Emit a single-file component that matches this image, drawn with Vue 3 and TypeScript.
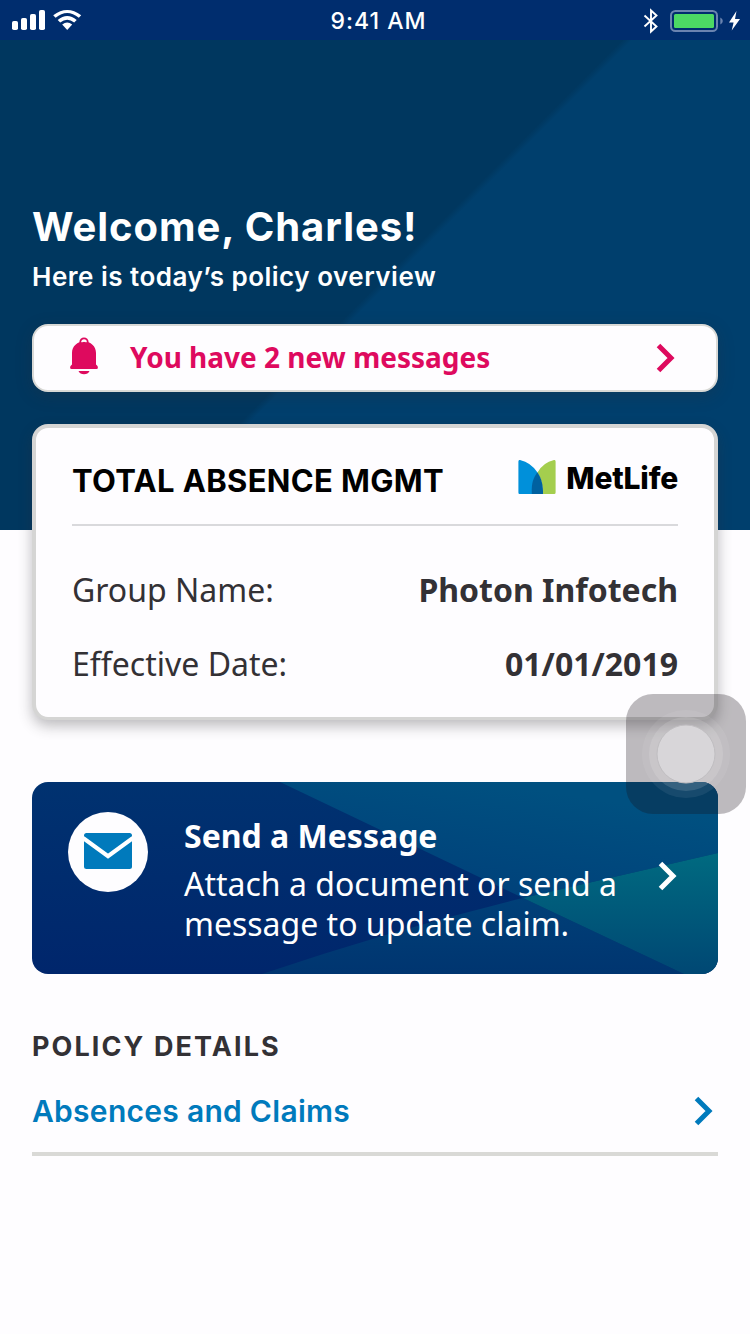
<script setup lang="ts">
interface Fact {
  label: string
  value: string
}

const facts: Fact[] = [
  { label: 'Group Name:', value: 'Photon Infotech' },
  { label: 'Effective Date:', value: '01/01/2019' },
]
</script>

<template>
  <div class="screen">
    <header class="status">
      <div class="status-left">
        <svg width="72" height="22" viewBox="0 0 72 22" fill="#fff">
          <rect x="0" y="12" width="6" height="9" rx="1.8" />
          <rect x="9" y="9" width="6" height="12" rx="1.8" />
          <rect x="18" y="5" width="6" height="16" rx="1.8" />
          <rect x="27" y="1" width="6" height="20" rx="1.8" />
          <path d="M41.2 6.2 43.6 8.8Q55.2-.6 66.8 8.8L69.2 6.2Q55.2-4.4 41.2 6.2Z" />
          <path d="M45.7 10.9 48.2 13.5Q55.2 8 62.2 13.5L64.7 10.9Q55.2 3.2 45.7 10.9Z" />
          <path d="M50.2 15.6 55.2 20.9 60.2 15.6Q55.2 11.6 50.2 15.6Z" />
        </svg>
      </div>
      <span class="clock">9:41 AM</span>
      <div class="status-right">
        <svg width="100" height="28" viewBox="0 0 100 28" fill="none">
          <path d="M4.5 8.5 16.5 19.5 11 24.5V3.500L16.500 8.500 4.500 19.500" stroke="#fff" stroke-width="1.900" />
          <rect x="31" y="4" width="46" height="20" rx="4.500" stroke="#6b84b0" stroke-width="2" />
          <rect x="34" y="7" width="40" height="14" rx="1.500" fill="#4cd964" />
          <path d="M80.300 10.500Q82.800 11.500 82.800 14T80.300 17.500Z" fill="#6b84b0" />
          <path d="M96.500 4 89 15.600H93.600L91.700 23.600 100 11.900H95Z" fill="#fff" />
        </svg>
      </div>
    </header>

    <section class="hero">
      <h1>Welcome, Charles!</h1>
      <p class="sub">Here is today’s policy overview</p>
      <div class="alert">
        <svg class="bell" width="28" height="38" viewBox="0 0 28 38">
          <circle cx="14" cy="5" r="3.700" fill="none" stroke="#de0a5e" stroke-width="1.800" />
          <path d="M14 4.500C20.500 4.500 26 9 26 16V27.500L27.500 29Q28.600 32 26.500 32H1.500Q-.6 32 .5 29L2 27.500V16C2 9 7.500 4.500 14 4.500Z" fill="#de0a5e" />
          <path d="M11.500 5Q14 3.500 16.500 5" stroke="#fff" stroke-width="1.200" fill="none" />
          <path d="M8.500 34H19.500Q18 37.300 14 37.300T8.500 34Z" fill="#de0a5e" />
        </svg>
        <span class="alert-text">You have 2 new messages</span>
        <svg class="chev" width="20" height="30" viewBox="0 0 20 30">
          <path d="M2.500 2.500 15 15 2.500 27.500" fill="none" stroke="#de0a5e" stroke-width="5" />
        </svg>
      </div>
    </section>

    <main>
      <section class="policy">
        <div class="policy-head">
          <h2>TOTAL ABSENCE MGMT</h2>
          <div class="brand">
            <svg width="38" height="34" viewBox="0 0 38 34">
              <path d="M2 0Q13 2.500 19.500 12.500Q16 20 15.500 34H1.500Q.4 34 .4 32.500V1.500Q.4-.2 2 0Z" fill="#0090da" />
              <path d="M36 0Q25 2.500 19.500 12.500Q24.500 20 25 34H36.200Q37.600 34 37.600 32.500V1.500Q37.600-.2 36 0Z" fill="#a4ce4e" />
              <path d="M19.400 12.200C15.300 18 13.300 22.500 13.800 34H25C25.200 25 23.500 18 19.400 12.200Z" fill="#0061a0" />
            </svg>
            <span class="brand-name">MetLife</span>
          </div>
        </div>
        <dl>
          <div v-for="fact in facts" :key="fact.label" class="fact">
            <dt>{{ fact.label }}</dt>
            <dd>{{ fact.value }}</dd>
          </div>
        </dl>
      </section>

      <section class="message">
        <svg class="facets" viewBox="0 0 686 192" preserveAspectRatio="none">
          <defs>
            <linearGradient id="base" x1="0" y1="0" x2="0" y2="1">
              <stop offset="0" stop-color="#003270" />
              <stop offset="1" stop-color="#00266c" />
            </linearGradient>
            <linearGradient id="top" gradientUnits="userSpaceOnUse" x1="460" y1="0" x2="440" y2="120">
              <stop offset="0" stop-color="#005080" />
              <stop offset="1" stop-color="#00407a" />
            </linearGradient>
            <linearGradient id="right" gradientUnits="userSpaceOnUse" x1="0" y1="72" x2="0" y2="190">
              <stop offset="0" stop-color="#006a80" />
              <stop offset="1" stop-color="#004874" />
            </linearGradient>
            <linearGradient id="bottom" gradientUnits="userSpaceOnUse" x1="0" y1="116" x2="0" y2="192">
              <stop offset="0" stop-color="#004078" />
              <stop offset="1" stop-color="#003570" />
            </linearGradient>
          </defs>
          <rect width="686" height="192" fill="url(#base)" />
          <path d="M248 0H686V71L491 116Z" fill="url(#top)" />
          <path d="M230 192Q360 148 491 116L652 192Z" fill="url(#bottom)" />
          <path d="M491 116 686 71V192H652Z" fill="url(#right)" />
        </svg>
        <div class="envelope">
          <svg width="48" height="36" viewBox="0 0 48 36">
            <rect width="48" height="36" rx="2.500" fill="#007abc" />
            <path d="M-1 5 24 23.200 49 5" fill="none" stroke="#fff" stroke-width="4.200" />
          </svg>
        </div>
        <div class="message-copy">
          <h3>Send a Message</h3>
          <p>Attach a document or send a<br />message to update claim.</p>
        </div>
        <svg class="message-chev" width="20" height="30" viewBox="0 0 20 30">
          <path d="M2.500 2.500 15 15 2.500 27.500" fill="none" stroke="#fff" stroke-width="5" />
        </svg>
      </section>

      <section class="details">
        <h4>POLICY DETAILS</h4>
        <div class="link-row">
          <span class="link">Absences and Claims</span>
          <svg width="20" height="30" viewBox="0 0 20 30">
            <path d="M2.500 2.500 15 15 2.500 27.500" fill="none" stroke="#007abc" stroke-width="5" />
          </svg>
        </div>
      </section>
    </main>

    <div class="assistive">
      <svg width="120" height="120" viewBox="0 0 120 120">
        <circle cx="60" cy="60" r="44" fill="#fff" fill-opacity=".07" />
        <circle cx="60" cy="60" r="37" fill="#fff" fill-opacity=".13" />
        <circle cx="60" cy="60" r="29" fill="#d8d6d9" stroke="#c0bec1" stroke-width="1" />
      </svg>
    </div>
  </div>
</template>

<style>
body {
  margin: 0;
  background: #fefdff;
}
</style>

<style scoped>
.screen {
  position: relative;
  width: 750px;
  height: 1334px;
  overflow: hidden;
  background: #fefdff;
  color: #333135;
  font-family: "Noto Sans", sans-serif;
}
h1, h2, h3, h4, p, dl, dt, dd {
  margin: 0;
}
svg {
  display: block;
  flex: none;
}
.status {
  display: grid;
  grid-template-columns: 1fr auto 1fr;
  align-items: center;
  box-sizing: border-box;
  height: 40px;
  padding: 0 10px 0 12px;
  background: #002d6e;
}
.status-left {
  padding-bottom: 1px;
}
.status-right {
  display: flex;
  justify-content: flex-end;
  padding-top: 1px;
}
.clock {
  padding: 2px 0 0 5px;
  color: #fff;
  font: 500 23px/38px Inter, sans-serif;
  letter-spacing: 1px;
}
.hero {
  box-sizing: border-box;
  height: 490px;
  padding: 161px 32px 0;
  background: linear-gradient(135deg, #00375f 50.2%, #003f6d 51%);
  color: #fff;
}
h1 {
  font: 700 40px/52px Inter, sans-serif;
  letter-spacing: 0.95px;
}
.sub {
  font: 600 26px/48px Inter, sans-serif;
  letter-spacing: 0.5px;
}
.alert {
  display: flex;
  align-items: center;
  box-sizing: border-box;
  height: 68px;
  margin-top: 23px;
  padding: 0 39px 0 36px;
  border: 2px solid #d9d9d6;
  border-radius: 16px;
  background: #fefdff;
  box-shadow: 0 4px 16px rgba(51, 49, 53, 0.25);
}
.bell {
  margin-top: -4px;
}
.alert-text {
  flex: 1;
  margin: -2px 0 0 32px;
  color: #de0a5e;
  font-size: 28px;
  font-weight: 700;
  line-height: 40px;
}
.chev {
  margin-right: 1px;
}
main {
  padding: 0 32px;
}
.policy {
  position: relative;
  box-sizing: border-box;
  height: 296px;
  margin-top: -106px;
  padding: 0 36px;
  border: 4px solid #d5d5d4;
  border-bottom-width: 3px;
  border-radius: 16px;
  background: #fefdff;
  box-shadow: 0 6px 14px rgba(51, 49, 53, 0.32);
}
.policy-head {
  display: flex;
  justify-content: space-between;
  align-items: center;
  height: 96px;
  border-bottom: 2px solid #d9d9dc;
}
h2 {
  margin-top: 10px;
  color: #000;
  font: 700 31px/40px Inter, sans-serif;
  letter-spacing: 0.35px;
  white-space: nowrap;
}
.brand {
  display: flex;
  align-items: center;
  gap: 10px;
  margin-top: 2px;
}
.brand-name {
  padding-top: 2px;
  color: #000;
  font: 800 30px/32px Inter, sans-serif;
  letter-spacing: -0.2px;
}
dl {
  display: flex;
  flex-direction: column;
  gap: 34px;
  padding-top: 44px;
}
.fact {
  display: flex;
  justify-content: space-between;
  font-size: 32px;
  line-height: 40px;
}
dd {
  font-weight: 700;
}
.message {
  position: relative;
  display: flex;
  box-sizing: border-box;
  height: 192px;
  margin-top: 62px;
  padding: 30px 40px 30px 36px;
  border-radius: 16px;
  overflow: hidden;
  color: #fff;
}
.facets {
  position: absolute;
  inset: 0;
  width: 100%;
  height: 100%;
}
.envelope,
.message-copy,
.message-chev {
  position: relative;
}
.envelope {
  display: flex;
  align-items: center;
  justify-content: center;
  box-sizing: border-box;
  width: 80px;
  height: 80px;
  padding-bottom: 2px;
  border-radius: 50%;
  background: #fefdff;
}
.message-copy {
  flex: 1;
  margin-left: 36px;
  padding-top: 4px;
  white-space: nowrap;
}
h3 {
  margin-bottom: 8px;
  font-size: 32px;
  line-height: 40px;
}
.message-copy p {
  font-size: 32px;
  line-height: 40px;
}
.message-chev {
  margin-top: 49px;
}
.details {
  margin-top: 53px;
}
h4 {
  font: 700 27px/40px Inter, sans-serif;
  letter-spacing: 2.1px;
}
.link-row {
  display: flex;
  align-items: center;
  justify-content: space-between;
  box-sizing: border-box;
  height: 89px;
  padding: 2px 4px 0 0;
  border-bottom: 4px solid #d9d9d6;
}
.link {
  color: #007abc;
  font: 600 30px/40px Inter, sans-serif;
  letter-spacing: 0.28px;
}
.assistive {
  position: absolute;
  top: 694px;
  left: 626px;
  width: 120px;
  height: 120px;
  border-radius: 27px;
  background: rgba(20, 16, 22, 0.28);
}
</style>
